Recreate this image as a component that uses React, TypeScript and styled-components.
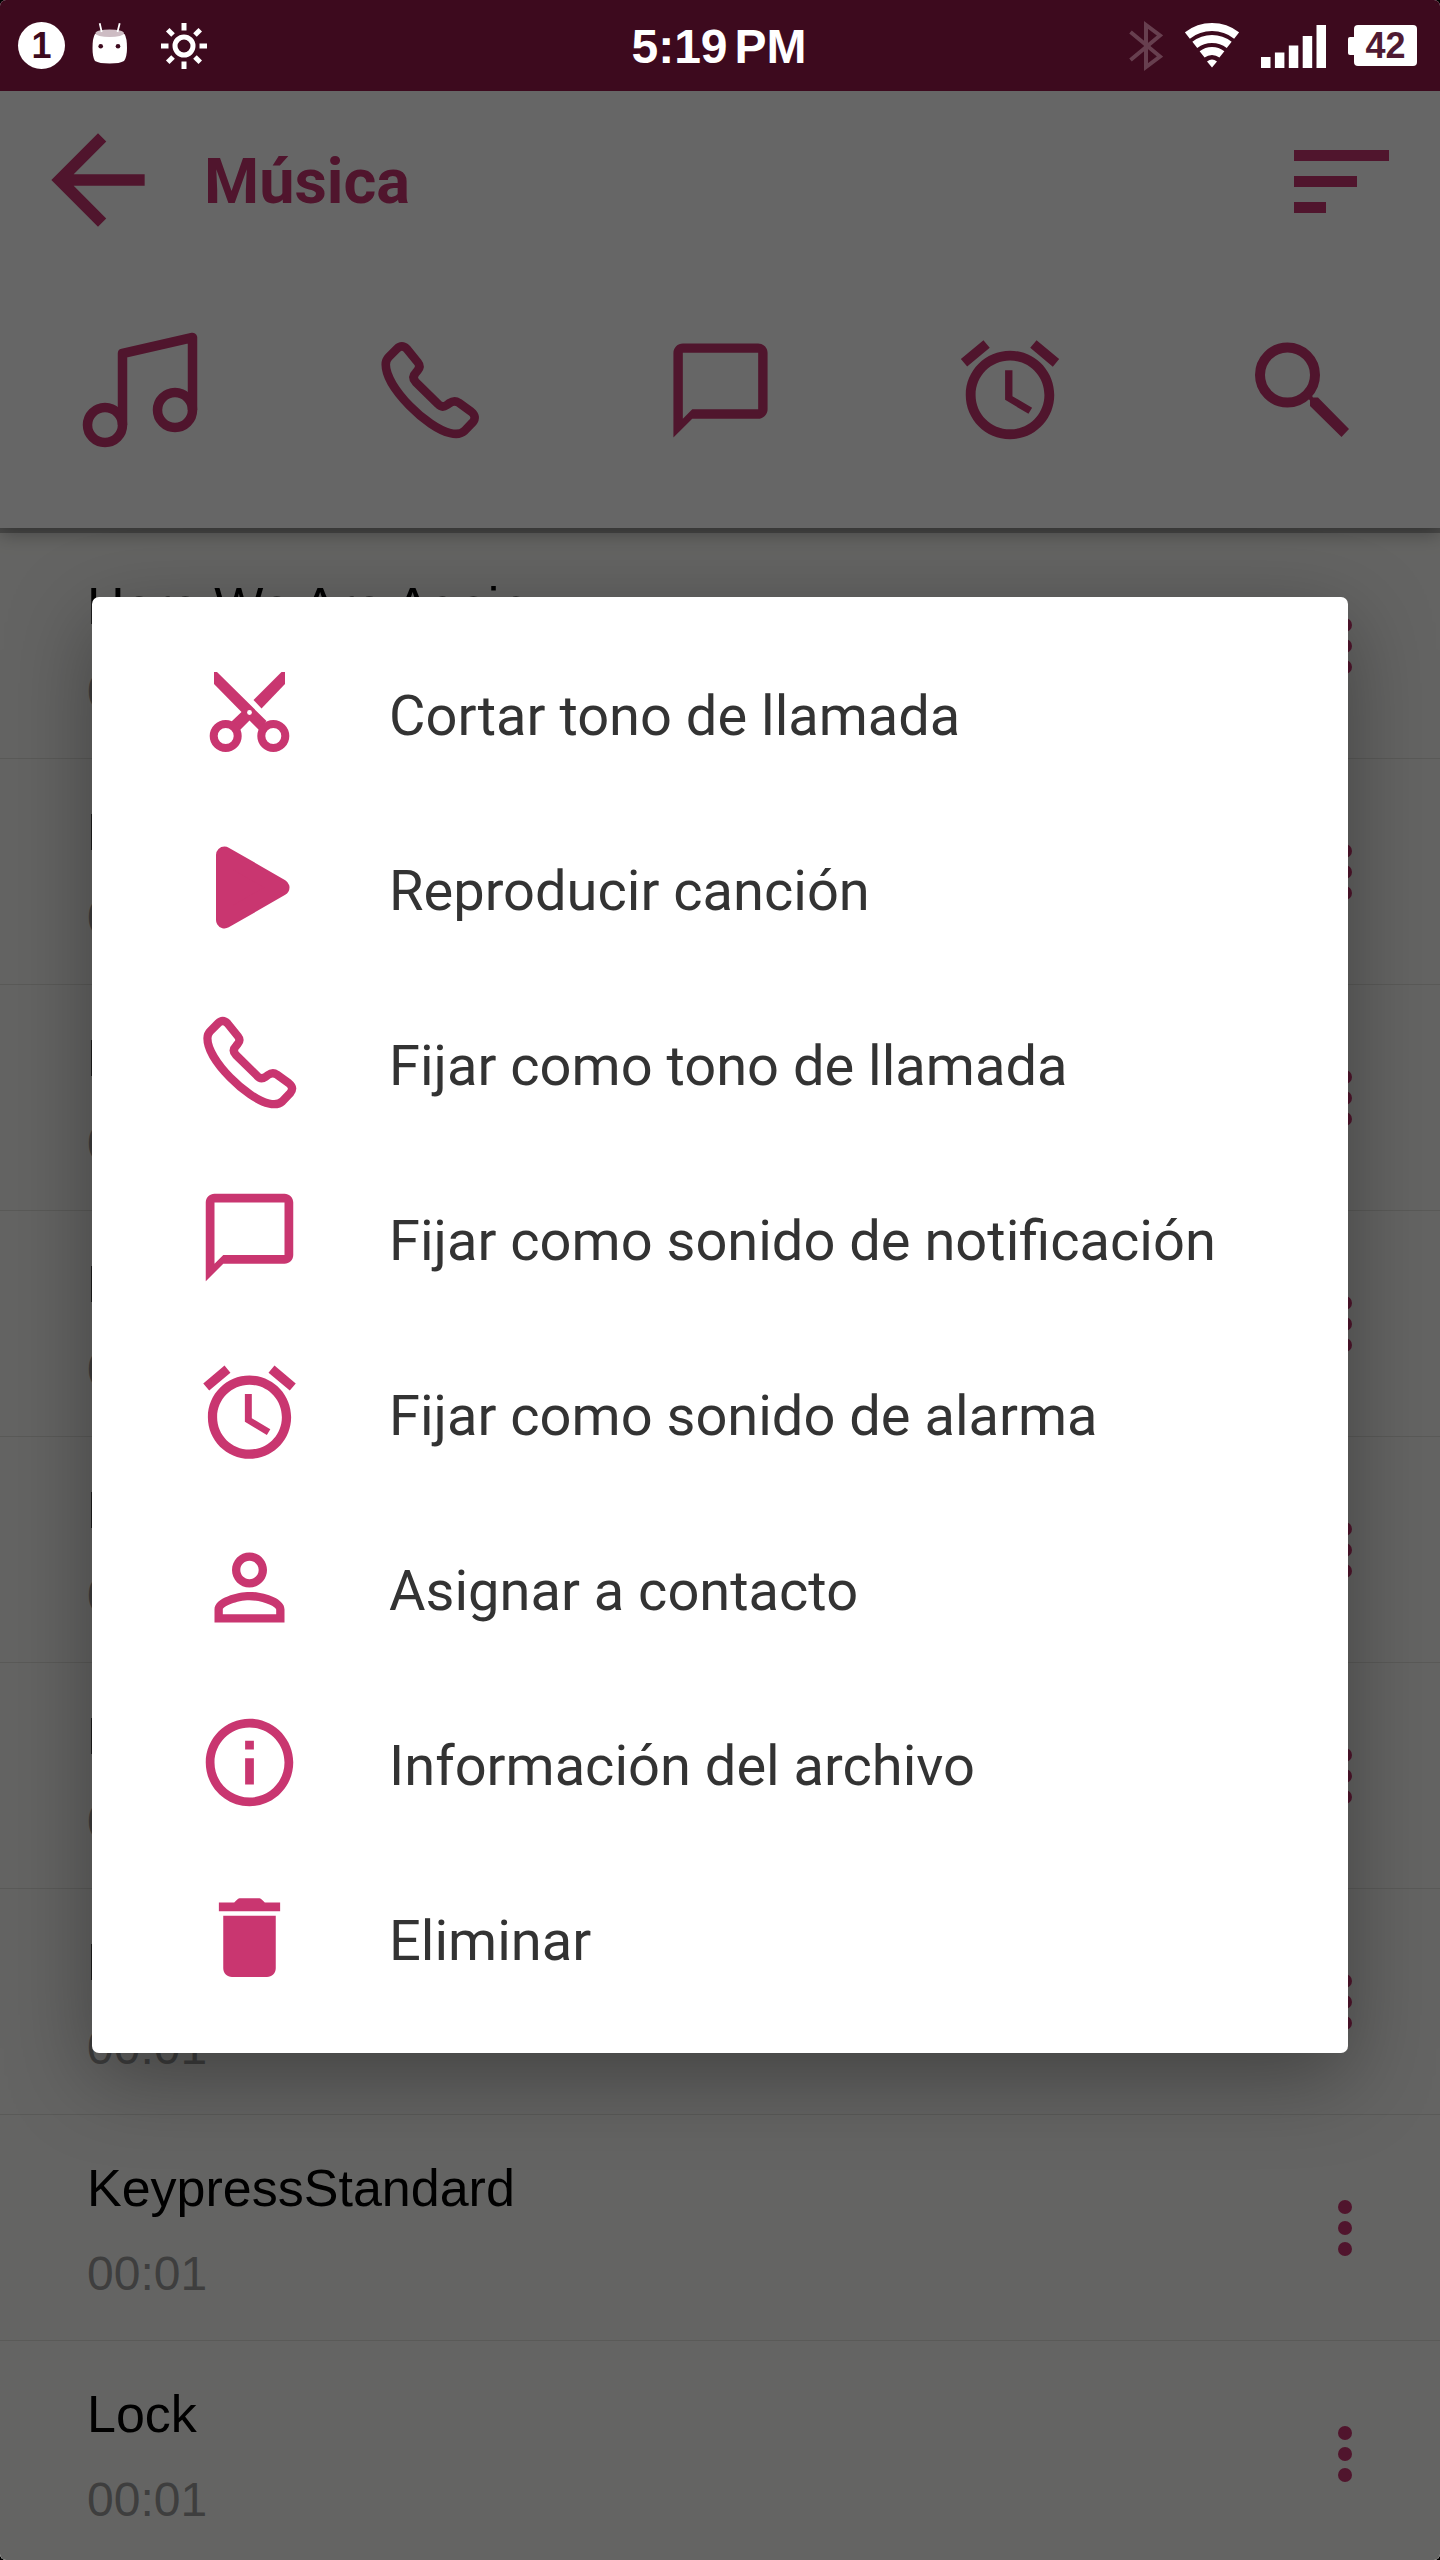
import React from 'react';
import styled, { createGlobalStyle } from 'styled-components';

const color = {
  accent: '#c93670',
  statusBar: '#3d0a1e',
  surface: '#ffffff',
  list: '#fbfbf7',
  divider: '#e0e0dc',
  text: '#000000',
  muted: '#9c9c9c',
  menuText: '#333333',
};

const GlobalStyle = createGlobalStyle`
  *, *::before, *::after { box-sizing: border-box; }
  body { margin: 0; background: #000; }
  button { border: 0; padding: 0; margin: 0; background: none; color: inherit; font: inherit; cursor: pointer; }
  ul { list-style: none; margin: 0; padding: 0; }
  h1, p { margin: 0; }
  svg { display: block; flex: none; }
`;

const Screen = styled.div`
  display: flex;
  flex-direction: column;
  height: 100vh;
  overflow: hidden;
  border-radius: 6px;
  background: ${color.list};
`;

/* Status bar */

const StatusBar = styled.div`
  display: grid;
  grid-template-columns: 1fr auto 1fr;
  align-items: center;
  flex: none;
  height: 91px;
  padding: 0 23px 0 18px;
  background: ${color.statusBar};
  color: #fff;
  font-family: 'Liberation Sans', Arial, sans-serif;
  font-weight: 700;
`;

const StatusGroup = styled.div<{ $end?: boolean }>`
  display: flex;
  align-items: center;
  justify-content: ${(p) => (p.$end ? 'flex-end' : 'flex-start')};
  gap: ${(p) => (p.$end ? 22 : 24)}px;
`;

const Clock = styled.time`
  display: flex;
  gap: 7px;
  padding: 2px 0 0 3px;
  font-size: 48px;
  line-height: 56px;
`;

const CountBadge = styled.span`
  width: 47px;
  height: 47px;
  border-radius: 50%;
  background: #fff;
  color: ${color.statusBar};
  font-size: 36px;
  line-height: 48px;
  text-align: center;
`;

const Battery = styled.span`
  display: flex;
  align-items: center;
  &::before {
    content: '';
    width: 6px;
    height: 18px;
    border-radius: 2px 0 0 2px;
    background: #fff;
  }
`;

const BatteryLevel = styled.span`
  width: 63px;
  height: 41px;
  border-radius: 4px;
  background: #fff;
  color: #4f1a33;
  font-size: 36px;
  line-height: 42px;
  text-align: center;
`;

/* App */

const Body = styled.div`
  position: relative;
  flex: 1;
  min-height: 0;
  overflow: hidden;
`;

const Header = styled.header`
  position: relative;
  z-index: 1;
  background: ${color.surface};
  color: ${color.accent};
  box-shadow: 0 5px 0 rgba(0, 0, 0, 0.26), 0 6px 18px rgba(0, 0, 0, 0.3);
`;

const AppBar = styled.div`
  display: flex;
  align-items: center;
  height: 178px;
  padding: 0 51px 0 28px;
`;

const Title = styled.h1`
  flex: 1;
  padding: 4px 0 0 36px;
  font: 700 63px/76px Roboto, sans-serif;
`;

const Tabs = styled.nav`
  display: flex;
  justify-content: space-between;
  padding: 61px 80px 78px;
`;

const IconButton = styled.button<{ $width?: number; $height?: number }>`
  display: flex;
  align-items: center;
  justify-content: center;
  flex: none;
  width: ${(p) => p.$width ?? 120}px;
  height: ${(p) => p.$height ?? 120}px;
`;

const SongList = styled.ul`
  padding-top: 5px;
  background: ${color.list};
  font-family: 'Liberation Sans', Arial, sans-serif;
`;

const SongRow = styled.li`
  display: flex;
  align-items: center;
  justify-content: space-between;
  height: 226px;
  padding: 0 65px 0 87px;
  border-bottom: 1px solid ${color.divider};
`;

const SongText = styled.div`
  display: grid;
  gap: 28px;
  padding-top: 4px;
`;

const SongName = styled.p`
  color: ${color.text};
  font-size: 52px;
  line-height: 60px;
`;

const SongTime = styled.p`
  color: ${color.muted};
  font-size: 48px;
  line-height: 56px;
`;

const MoreButton = styled(IconButton)`
  color: ${color.accent};
`;

/* Dialog */

const Scrim = styled.div`
  position: absolute;
  inset: 0;
  z-index: 2;
  display: flex;
  align-items: center;
  padding: 0 92px 1px;
  background: rgba(0, 0, 0, 0.6);
`;

const Menu = styled.div`
  flex: 1;
  padding: 28px 0;
  border-radius: 7px;
  background: ${color.surface};
  box-shadow: 0 24px 84px rgba(0, 0, 0, 0.34);
`;

const MenuItem = styled.button`
  display: flex;
  align-items: center;
  width: 100%;
  height: 175px;
  padding: 0 40px 0 105px;
  text-align: left;
`;

const MenuIcon = styled.span`
  display: flex;
  align-items: center;
  justify-content: center;
  flex: none;
  width: 105px;
  color: ${color.accent};
`;

const MenuLabel = styled.span`
  margin-left: 87px;
  padding-top: 6px;
  color: ${color.menuText};
  font: 400 56px/66px Roboto, sans-serif;
  white-space: nowrap;
`;

/* Icons */

type IconProps = { size?: number };

const Glyph = ({ size = 105, d }: { size?: number; d: string }) => (
  <svg width={size} height={size} viewBox="0 0 24 24" fill="currentColor" aria-hidden="true">
    <path d={d} />
  </svg>
);

const BackIcon = () => (
  <Glyph size={140} d="M20 11H7.83l5.59-5.59L12 4l-8 8 8 8 1.41-1.41L7.83 13H20v-2z" />
);

const MessageIcon = ({ size }: IconProps) => (
  <Glyph size={size} d="M20 2H4c-1.1 0-2 .9-2 2v18l4-4h14c1.1 0 2-.9 2-2V4c0-1.1-.9-2-2-2zm0 14H6l-2 2V4h16v12z" />
);

const AlarmIcon = ({ size = 111 }: IconProps) => (
  <Glyph
    size={size}
    d="M22 5.72l-4.6-3.86-1.29 1.53 4.6 3.86L22 5.72zM7.88 3.39L6.6 1.86 2 5.71l1.29 1.53 4.59-3.85zM12.5 8H11v6l4.75 2.85.75-1.23-4-2.37V8zM12 4c-4.97 0-9 4.03-9 9s4.02 9 9 9c4.97 0 9-4.03 9-9s-4.03-9-9-9zm0 16c-3.87 0-7-3.13-7-7s3.13-7 7-7 7 3.13 7 7-3.13 7-7 7z"
  />
);

const PersonIcon = () => (
  <Glyph d="M12 5.9c1.16 0 2.1.94 2.1 2.1s-.94 2.1-2.1 2.1S9.9 9.16 9.9 8s.94-2.1 2.1-2.1m0 9c2.97 0 6.1 1.46 6.1 2.1v1.1H5.9V17c0-.64 3.13-2.1 6.1-2.1M12 4C9.79 4 8 5.79 8 8s1.79 4 4 4 4-1.79 4-4-1.79-4-4-4zm0 9c-2.67 0-8 1.34-8 4v3h16v-3c0-2.66-5.33-4-8-4z" />
);

const InfoIcon = () => (
  <Glyph d="M11 7h2v2h-2zm0 4h2v6h-2zm1-9C6.48 2 2 6.48 2 12s4.48 10 10 10 10-4.48 10-10S17.52 2 12 2zm0 18c-4.41 0-8-3.59-8-8s3.59-8 8-8 8 3.59 8 8-3.59 8-8 8z" />
);

const TrashIcon = () => (
  <Glyph d="M6 19c0 1.1.9 2 2 2h8c1.1 0 2-.9 2-2V7H6v12zM19 4h-3.5l-.71-.71c-.18-.18-.44-.29-.7-.29H9.91c-.26 0-.52.11-.7.29L8.5 4H5v2h14V4z" />
);

const PhoneIcon = ({ size = 97 }: IconProps) => (
  <svg width={size} height={size} viewBox="0 0 272 272" fill="none" stroke="currentColor" strokeWidth="23" strokeLinejoin="round" aria-hidden="true">
    <path d="M48 26Q61 13 74 26L104 63Q112 73 103 84L98 90Q86 102 98 115L157 173Q168 185 181 176L188 171Q201 162 213 170L246 194Q262 207 250 222L228 245Q215 257 190 251C130 238 18 130 18 68Q18 56 26 48Z" />
  </svg>
);

const MusicIcon = () => (
  <svg width="120" height="120" viewBox="0 0 120 120" fill="none" stroke="currentColor" strokeWidth="9.5" strokeLinejoin="round" aria-hidden="true">
    <circle cx="25" cy="95" r="17.5" />
    <circle cx="95" cy="80" r="17.5" />
    <path d="M42.5 95V23.5L112.5 7.5V80" />
  </svg>
);

const SearchIcon = () => (
  <svg width="120" height="120" viewBox="0 0 120 120" aria-hidden="true">
    <circle cx="47.5" cy="45" r="27.5" fill="none" stroke="currentColor" strokeWidth="10" />
    <path d="M71 64L73 67.500H78L109 99L101.500 107L70 76V70.500L67 67Z" fill="currentColor" />
  </svg>
);

const SortIcon = () => (
  <svg width="95" height="65" viewBox="0 0 95 65" fill="currentColor" aria-hidden="true">
    <path d="M0 2H95V13H0ZM0 28H63V39H0ZM0 54H32V65H0Z" />
  </svg>
);

const MoreIcon = () => (
  <svg width="14" height="56" viewBox="0 0 14 56" fill="currentColor" aria-hidden="true">
    <circle cx="7" cy="7" r="7" />
    <circle cx="7" cy="28" r="7" />
    <circle cx="7" cy="49" r="7" />
  </svg>
);

const ScissorsIcon = () => (
  <svg width="105" height="105" viewBox="0 0 105 105" aria-hidden="true">
    <g fill="currentColor">
      <path d="M17 12H20L69.500 61L62 70L52.500 60.500L43 70L34.500 61.500L44.500 52L17 24Z" />
      <path d="M88 12H84.500L56.500 40L64.500 48.500L88 24Z" />
    </g>
    <circle cx="52.5" cy="52.500" r="2.4" fill="#fff" />
    <g fill="none" stroke="currentColor" strokeWidth="8">
      <circle cx="28.700" cy="76" r="12" />
      <circle cx="76.300" cy="76" r="12" />
    </g>
  </svg>
);

const PlayIcon = () => (
  <svg width="105" height="105" viewBox="0 0 105 105" fill="currentColor" stroke="currentColor" strokeWidth="17" strokeLinejoin="round" aria-hidden="true">
    <path d="M27.500 20L84 52.500L27.500 85Z" />
  </svg>
);

const AndroidIcon = () => (
  <svg width="41" height="50" viewBox="0 0 41 50" aria-hidden="true">
    <path d="M6 13Q3.500 17 3.500 27Q3.500 36 6 40Q10 42.500 20.700 42.500Q31 42.500 35 40Q38 36 38 27Q38 17 35.500 13Z" fill="#fff" />
    <ellipse cx="20.700" cy="12.200" rx="14.300" ry="3.800" fill="#cdbcc3" />
    <path d="M10.700 2.300L12.700 11M30.700 2.300L28.500 11" stroke="#fff" strokeWidth="1.800" />
    <circle cx="11.700" cy="25.300" r="2.300" fill={color.statusBar} />
    <circle cx="29" cy="25.300" r="2.300" fill={color.statusBar} />
  </svg>
);

const SunIcon = () => (
  <svg width="60" height="48" viewBox="-30 -24 60 48" fill="none" stroke="#fff" strokeWidth="5" aria-hidden="true">
    <circle r="9" />
    {[0, 45, 90, 135, 180, 225, 270, 315].map((a) => (
      <path key={a} d="M0 -15.500V-23" transform={`rotate(${a})`} />
    ))}
  </svg>
);

const BluetoothIcon = () => (
  <svg width="34" height="50" viewBox="0 0 34 50" fill="none" stroke="#fff" strokeOpacity="0.22" strokeWidth="4" aria-hidden="true">
    <path d="M1.500 11L31 35.500L17 46V4L31 14.500L1.500 39" />
  </svg>
);

const WifiIcon = () => (
  <svg width="54" height="45" viewBox="0 0 54 45" fill="none" stroke="#fff" strokeWidth="8" aria-hidden="true">
    <path d="M2.400 12.500A40 40 0 0 1 51.600 12.500M9.800 21.900A28 28 0 0 1 44.200 21.900M17.100 31.400A16 16 0 0 1 36.900 31.400" />
    <path d="M27 44.500L22 38.500A8 8 0 0 1 32 38.500Z" fill="#fff" stroke="none" />
  </svg>
);

const SignalIcon = () => (
  <svg width="65" height="44" viewBox="0 0 65 44" fill="#fff" aria-hidden="true">
    <path d="M0 33H9.500V44H0ZM13.900 28.500H23.400V44H13.900ZM27.800 21.500H37.300V44H27.800ZM41.700 12H51.200V44H41.700ZM55.500 1H65V44H55.500Z" />
  </svg>
);

/* Data */

const songs = [
  { name: 'Here We Are Again', time: '00:30' },
  { name: 'Beep', time: '00:01' },
  { name: 'Dock', time: '00:01' },
  { name: 'Hit', time: '00:01' },
  { name: 'Keypress', time: '00:01' },
  { name: 'KeypressDelete', time: '00:01' },
  { name: 'KeypressSpacebar', time: '00:01' },
  { name: 'KeypressStandard', time: '00:01' },
  { name: 'Lock', time: '00:01' },
];

const tabs = [
  { label: 'Música', icon: <MusicIcon /> },
  { label: 'Tonos de llamada', icon: <PhoneIcon size={102} /> },
  { label: 'Notificaciones', icon: <MessageIcon size={113} /> },
  { label: 'Alarmas', icon: <AlarmIcon size={118} /> },
  { label: 'Buscar', icon: <SearchIcon /> },
];

const actions = [
  { label: 'Cortar tono de llamada', icon: <ScissorsIcon /> },
  { label: 'Reproducir canción', icon: <PlayIcon /> },
  { label: 'Fijar como tono de llamada', icon: <PhoneIcon /> },
  { label: 'Fijar como sonido de notificación', icon: <MessageIcon /> },
  { label: 'Fijar como sonido de alarma', icon: <AlarmIcon /> },
  { label: 'Asignar a contacto', icon: <PersonIcon /> },
  { label: 'Información del archivo', icon: <InfoIcon /> },
  { label: 'Eliminar', icon: <TrashIcon /> },
];

export default function App() {
  return (
    <>
      <GlobalStyle />
      <Screen>
        <StatusBar>
          <StatusGroup>
            <CountBadge>1</CountBadge>
            <AndroidIcon />
            <SunIcon />
          </StatusGroup>
          <Clock>
            <span>5:19</span>
            <span>PM</span>
          </Clock>
          <StatusGroup $end>
            <BluetoothIcon />
            <WifiIcon />
            <SignalIcon />
            <Battery>
              <BatteryLevel>42</BatteryLevel>
            </Battery>
          </StatusGroup>
        </StatusBar>
        <Body>
          <Header>
            <AppBar>
              <IconButton $width={140} $height={140} aria-label="Atrás">
                <BackIcon />
              </IconButton>
              <Title>Música</Title>
              <IconButton $width={95} aria-label="Ordenar">
                <SortIcon />
              </IconButton>
            </AppBar>
            <Tabs>
              {tabs.map((tab) => (
                <IconButton key={tab.label} aria-label={tab.label}>
                  {tab.icon}
                </IconButton>
              ))}
            </Tabs>
          </Header>
          <SongList>
            {songs.map((song) => (
              <SongRow key={song.name}>
                <SongText>
                  <SongName>{song.name}</SongName>
                  <SongTime>{song.time}</SongTime>
                </SongText>
                <MoreButton $width={60} aria-label={`Opciones de ${song.name}`}>
                  <MoreIcon />
                </MoreButton>
              </SongRow>
            ))}
          </SongList>
          <Scrim>
            <Menu role="dialog" aria-modal="true" aria-label="Opciones">
              {actions.map((action) => (
                <MenuItem key={action.label}>
                  <MenuIcon>{action.icon}</MenuIcon>
                  <MenuLabel>{action.label}</MenuLabel>
                </MenuItem>
              ))}
            </Menu>
          </Scrim>
        </Body>
      </Screen>
    </>
  );
}
